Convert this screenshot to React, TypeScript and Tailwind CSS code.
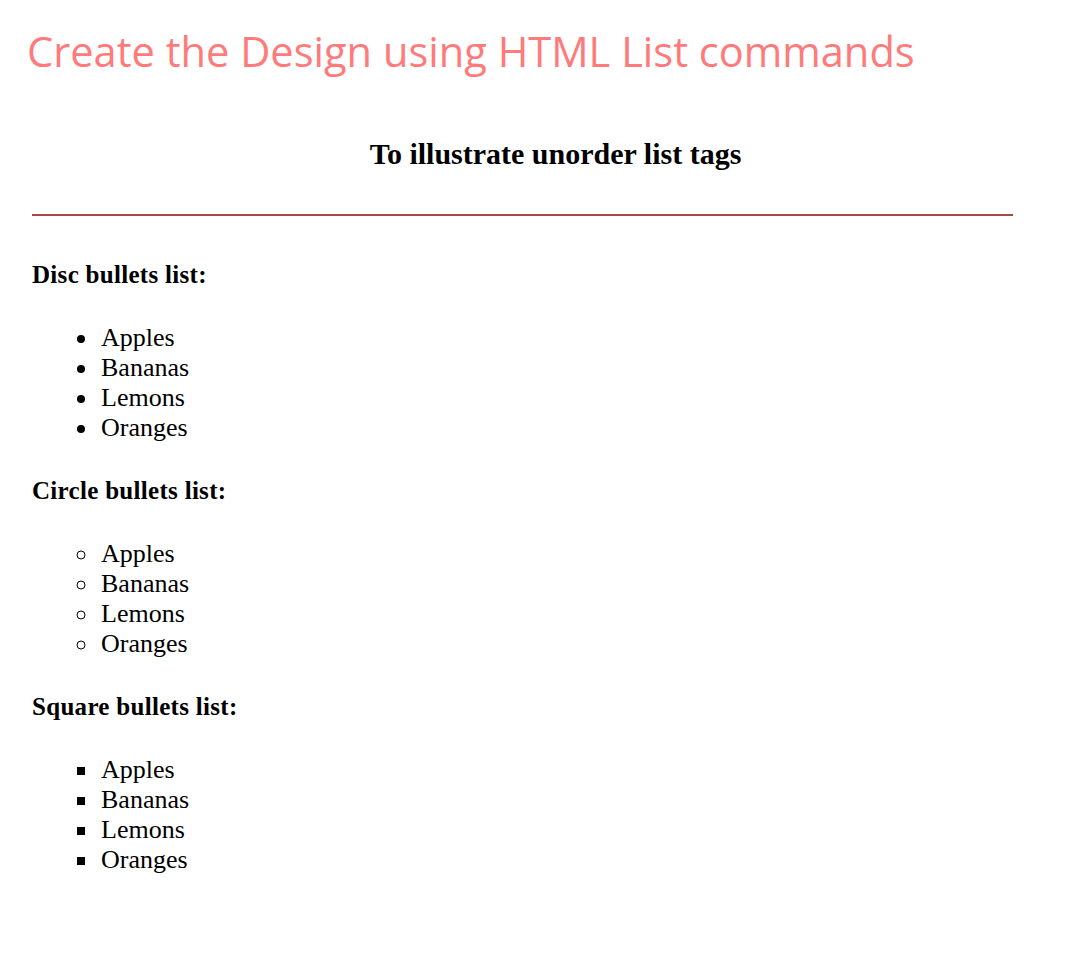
const items = ["Apples", "Bananas", "Lemons", "Oranges"];

function Section({ title, kind }: { title: string; kind: string }) {
  return (
    <div>
      <div className="h-[30px] text-[25px] font-bold leading-[30px] tracking-[0.3px]">{title}</div>
      <ul className={`mt-[33px] pl-[67px] text-[26px] leading-[30px] ${kind}`}>
        {items.map((i) => (
          <li key={i} className="pl-[2px]">{i}</li>
        ))}
      </ul>
    </div>
  );
}

export default function App() {
  return (
    <div className="w-[1067px] h-[970px] bg-white text-black" style={{ fontFamily: "'Liberation Serif', serif" }}>
      <div className="pl-[27px] pt-[26px] text-[41.6px] leading-[50px] text-[#ff7b7b]" style={{ fontFamily: "'Open Sans', sans-serif" }}>
        Create the Design using HTML List commands
      </div>
      <div className="w-[1013px] pl-[32px] box-border">
        <div className="mt-[62px] text-center text-[30px] font-bold leading-[32px] pl-[66px]">To illustrate unorder list tags</div>
        <div className="mt-[44px] h-[2px] bg-[#a54848]" />
        <div className="mt-[44px] flex flex-col gap-[33px]">
          <Section title="Disc bullets list:" kind="list-disc" />
          <Section title="Circle bullets list:" kind="list-[circle]" />
          <Section title="Square bullets list:" kind="list-[square]" />
        </div>
      </div>
    </div>
  );
}
